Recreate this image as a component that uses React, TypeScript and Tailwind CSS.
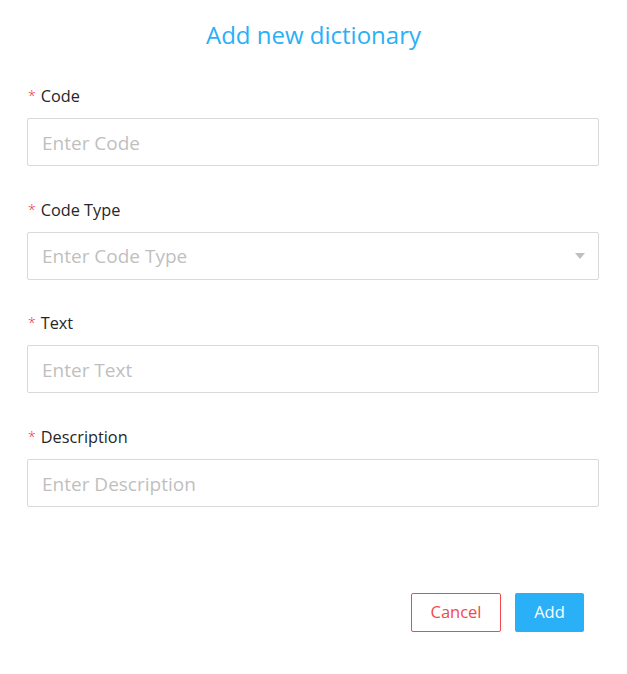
import React from 'react';

const fields = [
    { label: 'Code', placeholder: 'Enter Code' },
    { label: 'Code Type', placeholder: 'Enter Code Type', select: true },
    { label: 'Text', placeholder: 'Enter Text' },
    { label: 'Description', placeholder: 'Enter Description' },
];

export default function App() {
    return (
        <div className="w-[627px] h-[674px] bg-white font-['Open_Sans',sans-serif] px-[27px] pt-[19px]">
            <h1 className="text-center text-[24px] leading-[32px] text-[#29b0f6]">Add new dictionary</h1>

            <div className="mt-[33px] flex flex-col gap-[31.67px] pr-px">
                {fields.map(f => (
                    <div key={f.label} className="flex flex-col gap-[10px]">
                        <label className="flex items-center text-[16.3px] leading-[24px] text-[#262626]">
                            <span className="text-[#f5222d] text-[14px] font-light mr-[5px] ml-px">*</span>
                            {f.label}
                        </label>
                        <div className="h-[48px] flex items-center justify-between border border-[#d9d9d9] rounded-[2px] px-[14px]">
                            <span className="text-[19px] text-[#bfbfbf] pt-[2px]">{f.placeholder}</span>
                            {f.select && (
                                <svg width="10" height="6" viewBox="0 0 10 6" className="mr-[-1px] mt-px">
                                    <path d="M0 0h10L5 6z" fill="#bfbfbf" />
                                </svg>
                            )}
                        </div>
                    </div>
                ))}
            </div>

            <div className="mt-[86px] flex justify-end gap-[14px] pr-[16px]">
                <button className="w-[90px] h-[39px] border border-[#f5474d] rounded-[2px] text-[16.5px] text-[#f5474d] bg-white">Cancel</button>
                <button className="w-[69px] h-[39px] rounded-[2px] text-[16.5px] text-white bg-[#29b0f6]">Add</button>
            </div>
        </div>
    );
}
